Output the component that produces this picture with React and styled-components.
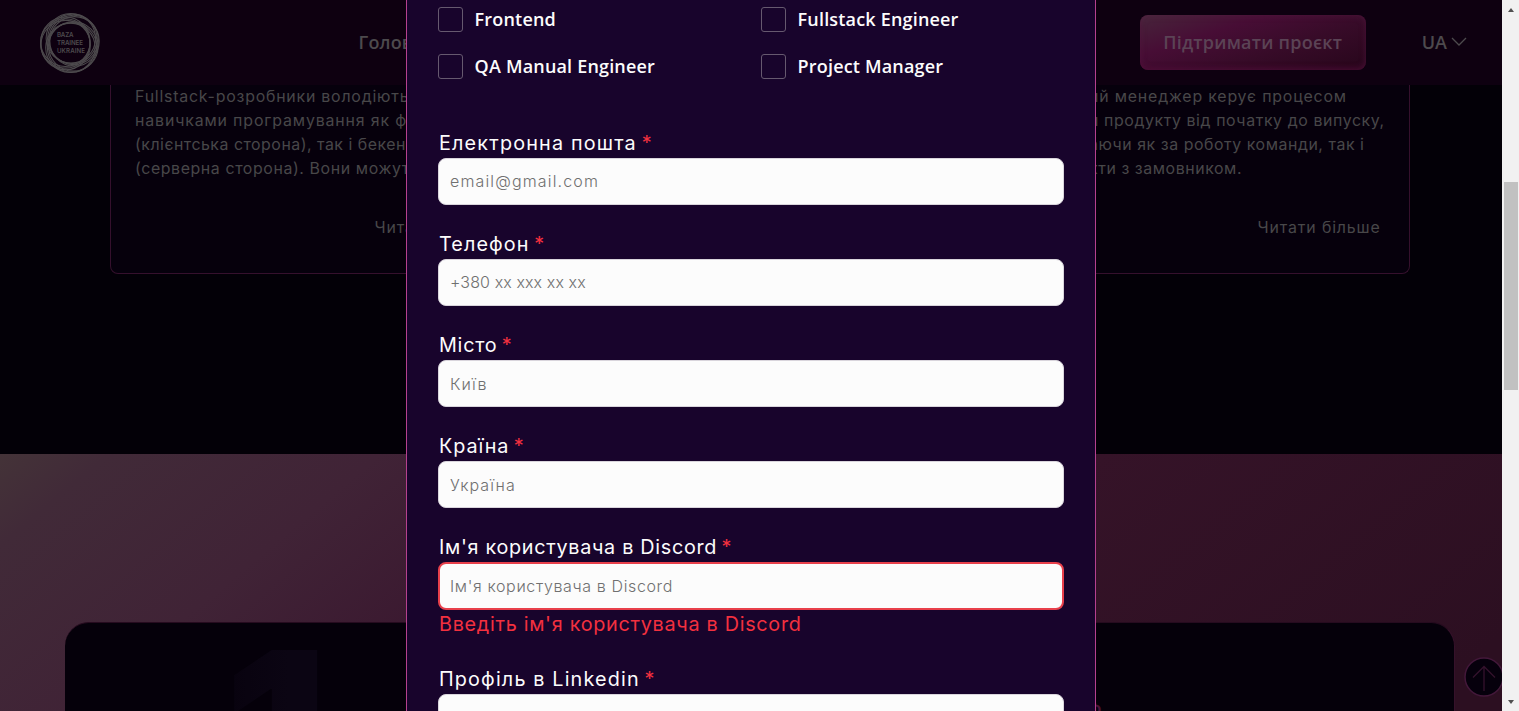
import React from "react";
import styled, { createGlobalStyle } from "styled-components";

const GlobalStyle = createGlobalStyle`
  * { box-sizing: border-box; }
  html, body { margin: 0; height: 100%; overflow: hidden; background: #030007; }
`;

const geo = `"Inter", "Liberation Sans", sans-serif`;
const sans = `"Open Sans", "Noto Sans", sans-serif`;

const Screen = styled.div`
  display: flex;
  width: 1519px;
  height: 711px;
  overflow: hidden;
`;

const Viewport = styled.div`
  position: relative;
  display: flex;
  flex-direction: column;
  width: 1502px;
  height: 711px;
  overflow: hidden;
  background: #030007;
`;

const Header = styled.header`
  flex: none;
  display: flex;
  align-items: center;
  height: 85px;
  padding: 0 35px 0 40px;
  background: #0e0010;
  color: #4d4a4d;
  font: 600 18px/24px ${sans};
`;

const Logo = styled.svg`
  flex: none;
  width: 60px;
  height: 60px;
  margin-right: 258.5px;
`;

const NavItem = styled.a`
  padding-bottom: 2px;
  letter-spacing: 0.15px;
`;

const Donate = styled.button`
  width: 226px;
  height: 55px;
  margin: 0 56px 0 auto;
  padding: 0 0 2px;
  border: 0;
  border-radius: 8px;
  color: #5b4355;
  font: inherit;
  letter-spacing: 0.23px;
  background: linear-gradient(162deg, #47253b 0%, #470d35 32%, #370b28 62%, #27061b 100%);
  box-shadow: inset 0 0 7px rgba(110, 50, 90, 0.35), inset 0 -3px 5px rgba(70, 0, 45, 0.5);
`;

const Lang = styled.div`
  display: flex;
  align-items: center;
  gap: 4px;
  padding-bottom: 2px;
`;

const Chevron = styled.svg`
  width: 16px;
  height: 9px;
`;

const Cards = styled.section`
  flex: none;
  display: flex;
  justify-content: space-between;
  width: 1300px;
  height: 188.5px;
  margin: 0 0 180px 109.5px;
`;

const Card = styled.article`
  display: flex;
  flex-direction: column;
  width: 417px;
  padding: 0 27px 0 24.5px;
  overflow: hidden;
  border: 1px solid #35102d;
  border-top: 0;
  border-radius: 0 0 8px 8px;
  background: #06000c;
  color: #484749;
  font: 400 15.9px/24px ${geo};
`;

const Copy = styled.p`
  margin: 0;
`;

const Line = styled.span`
  display: block;
  white-space: nowrap;
  margin-left: ${(p) => p.$indent || 0}px;
  letter-spacing: ${(p) => p.$ls || 0}px;
`;

const More = styled.a`
  align-self: flex-end;
  width: 124px;
  margin-top: 34.5px;
  white-space: nowrap;
  letter-spacing: 0.86px;
`;

const Steps = styled.section`
  flex: 1;
  padding: 168.5px 47px 0 65px;
  background: linear-gradient(140deg, #443338 0%, #412a38 6%, #402336 21%, #3a172f 37%, #351328 61%, #2c0f21 95%);
`;

const Panel = styled.div`
  display: flex;
  width: 1390px;
  height: 90px;
  overflow: hidden;
  border: 1px solid #35112a;
  border-top-color: #260b1f;
  border-left: 0;
  border-radius: 24px 24px 0 0;
  background: #05000a;
`;

const StepNumber = styled.span`
  width: 200px;
  margin: 27px 0 0 63px;
  text-align: right;
  font: 900 230px/167px ${geo};
  color: transparent;
  background: linear-gradient(90deg, #07010d 40%, #0b0513 80%);
  background-clip: text;
`;

const StepMark = styled.span`
  margin: 76px 0 0 760px;
  color: #4a1338;
  font: 700 16px/20px ${geo};
`;

const ToTop = styled.svg`
  position: absolute;
  left: 1464px;
  top: 656.5px;
  width: 40px;
  height: 40px;
`;

const Modal = styled.form`
  position: absolute;
  left: 406px;
  top: 0;
  width: 690px;
  height: 711px;
  padding: 7px 31px 0;
  overflow: hidden;
  border: solid #b5418f;
  border-width: 0 1px;
  background: #18042c;
`;

const Roles = styled.div`
  display: grid;
  grid-template-columns: 323px 1fr;
  grid-auto-rows: 25px;
  row-gap: 22px;
  height: 122.6px;
`;

const Role = styled.label`
  display: flex;
  align-items: center;
  gap: 11.6px;
  color: #fcfcfc;
  font: 600 18px/25px ${sans};
  letter-spacing: 0.18px;
`;

const Box = styled.span`
  width: 25px;
  height: 25px;
  border: 1px solid #66596f;
  border-radius: 3px;
`;

const Field = styled.div`
  display: flex;
  flex-direction: column;
  width: 626px;
  margin-bottom: 26px;
`;

const Label = styled.label`
  height: 28px;
  padding-left: 1px;
  color: #fcfcfc;
  font: 400 19.8px/27px ${geo};
  letter-spacing: ${(p) => p.$ls || 0}px;
`;

const Star = styled.span`
  margin-left: -2px;
  color: #f3303f;
`;

const Input = styled.input`
  width: 100%;
  height: 47.2px;
  padding: 0 ${(p) => (p.$error ? 10 : 11)}px;
  border: ${(p) => (p.$error ? "2px solid #e8404b" : "1px solid #d9d5dc")};
  border-radius: 8px;
  background: #fcfcfc;
  font: 300 16px/24px ${geo};
  letter-spacing: ${(p) => p.$ls || 0}px;
  &::placeholder { color: #707070; opacity: 1; }
`;

const ErrorText = styled.p`
  height: 30px;
  margin: 0;
  padding-left: 1px;
  color: #f3303f;
  font: 400 19.8px/29px ${geo};
  letter-spacing: ${(p) => p.$ls || 0}px;
`;

const Scrollbar = styled.div`
  display: flex;
  flex-direction: column;
  align-items: center;
  width: 17px;
  height: 711px;
  background: #f1f1f1;
`;

const Arrow = styled.span`
  width: 0;
  height: 0;
  margin-top: ${(p) => (p.$down ? "auto" : "8px")};
  margin-bottom: ${(p) => (p.$down ? "7px" : "0")};
  border: 3.5px solid transparent;
  border-${(p) => (p.$down ? "top" : "bottom")}: 4px solid #505050;
  border-${(p) => (p.$down ? "bottom" : "top")}: 0;
`;

const Thumb = styled.span`
  width: 14px;
  height: 208px;
  margin-top: 170px;
  background: #c1c1c1;
`;

const roles = ["Frontend", "Fullstack Engineer", "QA Manual Engineer", "Project Manager"];

const fields = [
  { label: "Електронна пошта", hint: "email@gmail.com", ls: 1.17, hls: 1.15 },
  { label: "Телефон", hint: "+380 xx xxx xx xx", ls: 1.1, hls: 0.1 },
  { label: "Місто", hint: "Київ", ls: 0.75, hls: 1.1 },
  { label: "Країна", hint: "Україна", ls: 0.9, hls: 1.05 },
  {
    label: "Ім'я користувача в Discord",
    hint: "Ім'я користувача в Discord",
    ls: 0.7,
    hls: 0.63,
    error: "Введіть ім'я користувача в Discord",
    els: 0.71,
  },
  { label: "Профіль в Linkedin", hint: "", ls: 1.15, hls: 0 },
];

const ringAngles = [-80, -60, -40, -20, 45, 65, 85, 155, 175, 195];

function BrandLogo() {
  return (
    <Logo viewBox="0 0 60 60" fill="none" stroke="#4d4a4d" strokeWidth="1.1">
      {ringAngles.map((deg) => {
        const a = (deg * Math.PI) / 180;
        return <circle key={deg} cx={30 + 4.8 * Math.cos(a)} cy={30 + 4.8 * Math.sin(a)} r="24.7" />;
      })}
      <g fill="#4d4a4d" stroke="none" fontFamily="Inter, sans-serif" fontSize="6.2" fontWeight="600">
        <text x="17" y="24" textLength="16.5">BAZA</text>
        <text x="17" y="32" textLength="26">TRAINEE</text>
        <text x="17" y="39.5" textLength="28">UKRAINE</text>
      </g>
    </Logo>
  );
}

export default function App() {
  return (
    <Screen>
      <GlobalStyle />
      <Viewport>
        <Header>
          <BrandLogo />
          <NavItem>Голов</NavItem>
          <Donate type="button">Підтримати проєкт</Donate>
          <Lang>
            UA
            <Chevron viewBox="0 0 16 9" fill="none" stroke="#4d4a4d" strokeWidth="1.3">
              <path d="M1 1 8 8 15 1" />
            </Chevron>
          </Lang>
        </Header>

        <Cards>
          <Card>
            <Copy>
              <Line $ls={0.78}>Fullstack-розробники володіють</Line>
              <Line $ls={0.86}>навичками програмування як ф</Line>
              <Line $ls={0.5}>(клієнтська сторона), так і бекен</Line>
              <Line $ls={0.6}>(серверна сторона). Вони можут</Line>
            </Copy>
            <More>Читати</More>
          </Card>
          <Card>
            <Copy>
              <Line $ls={0.82} $indent={71}>ий менеджер керує процесом</Line>
              <Line $ls={0.59} $indent={71}>и продукту від початку до випуску,</Line>
              <Line $ls={0.55} $indent={71}>аючи як за роботу команди, так і</Line>
              <Line $ls={0.57} $indent={71}>кти з замовником.</Line>
            </Copy>
            <More>Читати більше</More>
          </Card>
        </Cards>

        <Steps>
          <Panel>
            <StepNumber>1</StepNumber>
            <StepMark>Ф</StepMark>
          </Panel>
        </Steps>

        <ToTop viewBox="0 0 40 40" fill="none">
          <circle cx="20" cy="20" r="19" fill="#06000c" stroke="#43183a" strokeWidth="1.5" />
          <path d="M20 34V9M9 20.5 20 9.5 31 20.5" stroke="#35122d" strokeWidth="1.3" />
        </ToTop>

        <Modal>
          <Roles>
            {roles.map((name) => (
              <Role key={name}>
                <Box />
                {name}
              </Role>
            ))}
          </Roles>
          {fields.map((f) => (
            <Field key={f.label}>
              <Label $ls={f.ls}>
                {f.label} <Star>*</Star>
              </Label>
              <Input placeholder={f.hint} $ls={f.hls} $error={Boolean(f.error)} />
              {f.error && <ErrorText $ls={f.els}>{f.error}</ErrorText>}
            </Field>
          ))}
        </Modal>
      </Viewport>
      <Scrollbar>
        <Arrow />
        <Thumb />
        <Arrow $down />
      </Scrollbar>
    </Screen>
  );
}
